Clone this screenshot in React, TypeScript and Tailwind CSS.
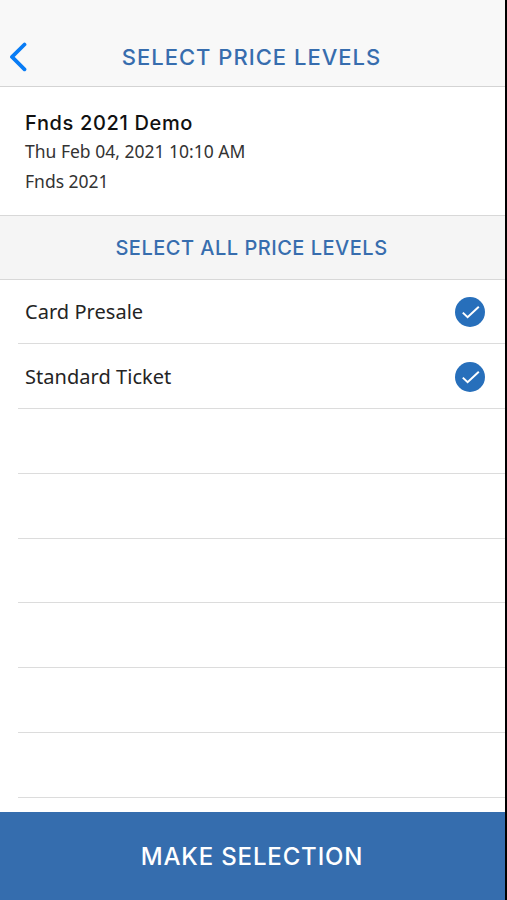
import React from 'react';

interface PriceLevel {
  name: string;
  selected: boolean;
}

const priceLevels: PriceLevel[] = [
  { name: 'Card Presale', selected: true },
  { name: 'Standard Ticket', selected: true },
];

const EMPTY_ROWS = 6;

const CheckBadge: React.FC = () => (
  <svg viewBox="0 0 30 30" className="w-[30px] h-[30px]" fill="none">
    <circle cx="15" cy="15" r="15" fill="#276fbb" />
    <path d="M7.8 15.6 L12.6 20.2 L23.8 9.8" stroke="white" strokeWidth="2" />
  </svg>
);

const Row: React.FC<{ level?: PriceLevel }> = ({ level }) => (
  <li className="flex items-center justify-between h-[64.78px] shrink-0 pt-px pl-[7px] pr-5 border-b border-[#dcdcdc]">
    {level && (
      <>
        <span className="text-[20px] tracking-[0.04px] text-[#242424]">{level.name}</span>
        {level.selected && <CheckBadge />}
      </>
    )}
  </li>
);

const App: React.FC = () => {
  return (
    <div className="h-[900px] w-[507px] overflow-hidden bg-black font-['Noto_Sans',sans-serif]">
      <div className="flex flex-col h-full w-[505px] bg-white">
        <header className="grid grid-cols-[40px_1fr_40px] h-[87px] shrink-0 pt-[27px] bg-[#f8f8f8] border-b border-[#d4d4d4]">
          <button className="flex items-center pl-[8px]" aria-label="Back">
            <svg viewBox="0 0 19 30" className="w-[19px] h-[30px]" fill="none">
              <path
                d="M16.5 2.5 L4 14.9 L16.5 27.3"
                stroke="#087cf5"
                strokeWidth="3.8"
                strokeLinecap="round"
                strokeLinejoin="round"
              />
            </svg>
          </button>
          <h1 className="flex items-center justify-center pt-[2px] pr-[2px] font-['Inter',sans-serif] text-[22px] font-medium tracking-[1px] text-[#376dae] whitespace-nowrap">
            SELECT PRICE LEVELS
          </h1>
        </header>

        <section className="h-[128px] shrink-0 pl-[25px] pt-[21px] text-[#333]">
          <h2 className="pt-px font-['Inter',sans-serif] text-[20px] leading-[28px] font-medium tracking-[0.65px] text-[#111]">
            Fnds 2021 Demo
          </h2>
          <p className="text-[17.5px] leading-[29px]">Thu Feb 04, 2021 10:10 AM</p>
          <p className="pt-px text-[17.5px] leading-[29px]">Fnds 2021</p>
        </section>

        <button className="flex items-center justify-center h-[64.5px] shrink-0 pt-px pr-[2px] bg-[#f5f5f5] border-y border-[#d8d8d8] font-['Inter',sans-serif] text-[20px] font-medium tracking-[0.5px] text-[#376dae]">
          SELECT ALL PRICE LEVELS
        </button>

        <ul className="flex flex-col flex-1 min-h-0 overflow-hidden pl-[18px]">
          {priceLevels.map((level) => (
            <Row key={level.name} level={level} />
          ))}
          {Array.from({ length: EMPTY_ROWS }, (_, i) => (
            <Row key={i} />
          ))}
        </ul>

        <button className="flex items-center justify-center h-[88px] shrink-0 pt-[2px] pr-px bg-[#356dae] font-['Inter',sans-serif] text-[24px] font-medium tracking-[0.85px] text-white">
          MAKE SELECTION
        </button>
      </div>
    </div>
  );
};

export default App;
